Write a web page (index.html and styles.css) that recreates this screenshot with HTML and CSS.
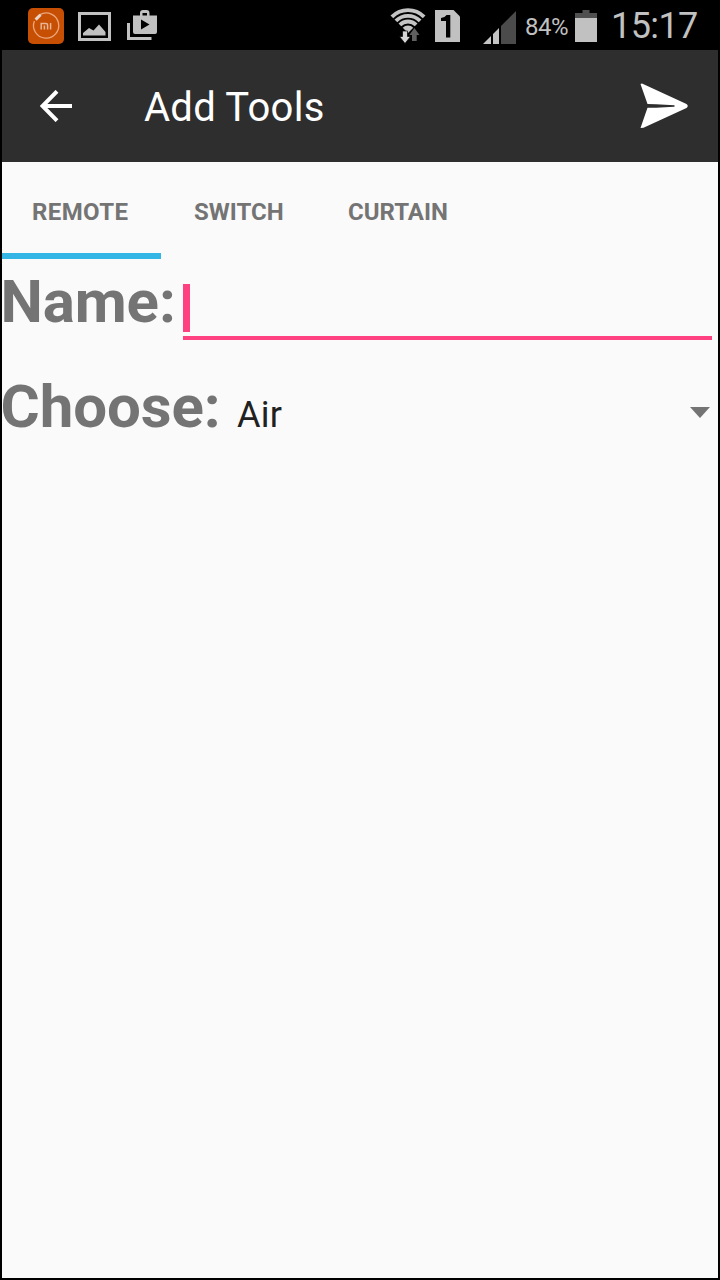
FILE: index.html
```
<!DOCTYPE html>
<html lang="en">
<head>
<meta charset="utf-8">
<title>Add Tools</title>
<link rel="stylesheet" href="styles.css">
</head>
<body>
<div class="phone">
  <header class="status">
    <div class="status-left">
      <svg width="36" height="36" viewBox="0 0 36 36">
        <rect width="36" height="36" rx="5" fill="#c64f04"/>
        <path d="M12 6.6A12.6 12.6 0 1 1 6.4 13" fill="none" stroke="#eca77c" stroke-width="1.3"/>
        <path d="M7.6 11.600L12.500 6.800" stroke="#e8d5c8" stroke-width="3"/>
        <path d="M13.2 21.5V15.4H18Q19.6 15.4 19.6 17V21.5M16.4 17.5V21.5M22.6 15V21.5" fill="none" stroke="#e8b595" stroke-width="1.5"/>
      </svg>
      <svg class="picture" width="33" height="30" viewBox="0 0 33 30">
        <path fill-rule="evenodd" d="M0 0H33V29H0ZM3 3V26H30V3Z" fill="#c1c1c1"/>
        <path d="M5 23.500V21L11 16L15.500 18.500L21 12.500L27.500 20V23.500Z" fill="#c1c1c1"/>
      </svg>
      <svg class="store" width="31" height="31" viewBox="0 0 31 31">
        <path fill-rule="evenodd" d="M6 5.500H13V3Q13 0 16 0H19.500Q22.500 0 22.500 3V5.500H30V22Q30 24 28 24H8Q6 24 6 22ZM15.500 5.500H20V3H15.500ZM14 9.500V19.500L22.500 14.500Z" fill="#c1c1c1"/>
        <path d="M1.500 13V28.500H24.500" fill="none" stroke="#c1c1c1" stroke-width="3"/>
      </svg>
    </div>
    <div class="status-right">
      <svg class="wifi" width="36" height="37" viewBox="0 0 36 37">
        <clipPath id="fan"><path d="M18 26L-2 6V-3H38V6Z"/></clipPath>
        <g clip-path="url(#fan)" fill="none" stroke="#c3c3c3" stroke-width="3.800">
          <circle cx="18" cy="26" r="22.800"/>
          <circle cx="18" cy="26" r="17.100"/>
          <circle cx="18" cy="26" r="11.500"/>
          <circle cx="18" cy="26" r="7.500" fill="#c3c3c3" stroke="none"/>
        </g>
        <path d="M12.500 24H17.500V29.500H20.500L15 36.500L9.500 29.500H12.500Z" fill="#d6d6d6" stroke="#000" stroke-width=".7"/>
        <path d="M22 34V28H19.300L24.400 21L29.500 28H26.700V34Z" fill="#606060"/>
      </svg>
      <svg class="sim" width="25" height="32" viewBox="0 0 25 32">
        <path d="M0 0H18.500L25 6.500V32H0Z" fill="#c1c1c1"/>
        <path d="M6 8Q9.500 8 11.600 5H15.300V27.500H11V11H6Z" fill="#000"/>
      </svg>
      <svg class="signal" width="33" height="33" viewBox="0 0 33 33">
        <path d="M0 33L8 25V33Z M10 23L16 17V33H10Z" fill="#c4c4c4"/>
        <path d="M18 15L33 0V33H18Z" fill="#4b4b4b"/>
      </svg>
      <span class="percent">84%</span>
      <svg class="battery" width="22" height="32" viewBox="0 0 22 32">
        <path d="M0 3H7.500V0H14.500V3H22V8H0Z" fill="#505050"/>
        <path d="M0 8H22V32H0Z" fill="#c1c1c1"/>
      </svg>
      <span class="clock">15:17</span>
    </div>
  </header>
  <div class="appbar">
    <svg class="back" width="32" height="32" viewBox="0 0 32 32">
      <path d="M17 1.300L2.500 16L17 30.700M2.500 16H32" fill="none" stroke="#fff" stroke-width="4"/>
    </svg>
    <h1 class="title">Add Tools</h1>
    <svg class="send" width="48" height="46" viewBox="0 0 48 46">
      <path d="M2 .5L46.500 21Q49 23 46.500 25L3.500 44.800L.5 45L7.500 24.800H16L34.500 23.800V22.200L16 21.300L7.500 21L.5 1Z" fill="#fff"/>
    </svg>
  </div>
  <nav class="tabs">
    <a class="tab active">REMOTE</a>
    <a class="tab switch">SWITCH</a>
    <a class="tab">CURTAIN</a>
  </nav>
  <main class="form">
    <div class="row name-row">
      <label class="label">Name:</label>
      <div class="input"><span class="caret"></span></div>
    </div>
    <div class="row choose-row">
      <label class="label choose">Choose:</label>
      <div class="select">
        <span class="value">Air</span>
        <svg width="20" height="11" viewBox="0 0 20 11"><path d="M0 0H20L10 11Z" fill="#747474"/></svg>
      </div>
    </div>
  </main>
</div>
</body>
</html>
```
FILE: styles.css
```
* { box-sizing: border-box; }
body {
  margin: 0;
  background: #000;
  font-family: Roboto, "Noto Sans", sans-serif;
}
svg { display: block; flex: none; }
.phone {
  width: 720px;
  height: 1280px;
  padding: 0 2px 2px;
  display: flex;
  flex-direction: column;
  background: #000;
}
.status {
  height: 50px;
  flex: none;
  display: flex;
  justify-content: space-between;
  padding: 2px 0 0 26px;
  color: #c1c1c1;
}
.status-left { display: flex; align-items: center; gap: 14px; }
.picture { margin-top: 1px; }
.store { margin: -1px 0 0 2px; }
.status-right { display: flex; align-items: center; width: 328px; }
.wifi { margin: -1px 9px 0 0; }
.sim { margin-right: 23px; }
.signal { margin-top: 3px; }
.percent { width: 44px; margin-left: 9px; margin-top: 1px; font-size: 24px; line-height: 30px; letter-spacing: -0.5px; }
.battery { margin: -1px 0 0 6px; }
.clock { margin-left: 14px; font-size: 36px; line-height: 44px; letter-spacing: -0.6px; }
.appbar {
  height: 112px;
  flex: none;
  display: flex;
  align-items: center;
  padding: 0 30px 0 38px;
  background: #2e2e2e;
}
.title {
  flex: 1;
  margin: 4px 0 0 72px;
  font-size: 40px;
  line-height: 48px;
  font-weight: 400;
  letter-spacing: 0.25px;
  color: #fff;
}
.tabs {
  height: 97px;
  flex: none;
  display: flex;
  background: #fafafa;
}
.tab {
  padding: 35px 30px 0;
  font-size: 24px;
  line-height: 30px;
  font-weight: 700;
  color: #747474;
  border-bottom: 6px solid transparent;
}
.tab.active { width: 159px; margin-right: 3px; border-color: #33b5e5; letter-spacing: 0.4px; }
.tab.switch { width: 154px; }
.form { flex: 1; background: #fafafa; }
.row { display: flex; }
.label { font-size: 60px; line-height: 70px; font-weight: 700; color: #747474; white-space: nowrap; text-indent: -1.5px; letter-spacing: -0.1px; }
.name-row { height: 82px; padding-top: 7px; }
.name-row .label { width: 181px; padding-top: 1px; }
.input {
  width: 529px;
  height: 74px;
  border-bottom: 4px solid #ff4081;
  padding-top: 18px;
}
.caret { display: block; width: 7px; height: 48px; background: #ff4081; }
.choose-row { padding-top: 31px; }
.choose { width: 235px; }
.select { flex: 1; display: flex; align-items: center; justify-content: space-between; padding: 10px 8px 0 0; }
.value { font-size: 36px; line-height: 50px; color: #212121; margin-top: 5px; letter-spacing: 0.3px; }
```
